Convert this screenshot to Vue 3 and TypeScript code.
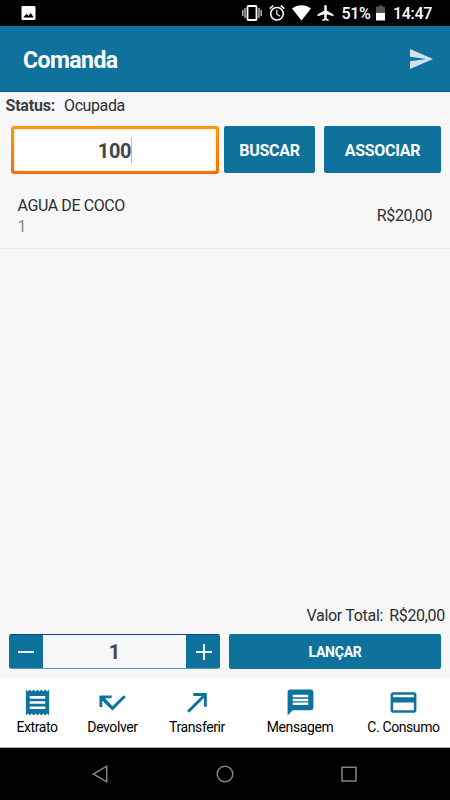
<script setup lang="ts">
import { ref } from 'vue'

interface Tab {
  label: string
  path: string
}

const code = ref('100')
const quantity = ref(1)

const items = [{ name: 'AGUA DE COCO', amount: 1, price: 'R$20,00' }]

const tabs: Tab[] = [
  { label: 'Extrato', path: 'M18 17H6v-2h12v2zm0-4H6v-2h12v2zm0-4H6V7h12v2zM3 22l1.5-1.5L6 22l1.5-1.5L9 22l1.5-1.5L12 22l1.5-1.5L15 22l1.5-1.5L18 22l1.5-1.5L21 22V2l-1.5 1.5L18 2l-1.5 1.5L15 2l-1.5 1.5L12 2l-1.5 1.5L9 2 7.5 3.5 6 2 4.5 3.5 3 2v20z' },
  { label: 'Devolver', path: 'M20.600 6.300L12 14.900 6.300 8.700H11.300V6.500H1.900v9h2.200v-4.900l7.900 7.500L22.200 7.900z' },
  { label: 'Transferir', path: 'M8.700 4.700v2.200h6.700L3.900 18.400 5.500 20 17 8.500v6.700h2.200V4.700z' },
  { label: 'Mensagem', path: 'M20 2H4c-1.100 0-1.990.9-1.990 2L2 22l4-4h14c1.100 0 2-.9 2-2V4c0-1.100-.9-2-2-2zm-2 12H6v-2h12v2zm0-3H6V9h12v2zm0-3H6V6h12v2z' },
  { label: 'C. Consumo', path: 'M20 4H4c-1.110 0-1.990.89-1.990 2L2 18c0 1.110.89 2 2 2h16c1.110 0 2-.89 2-2V6c0-1.110-.89-2-2-2zm0 14H4v-6h16v6zm0-10H4V6h16v2z' },
]
</script>

<template>
  <div class="screen">
    <div class="status">
      <svg class="photo" viewBox="0 0 16 16"><path fill="#fff" fill-rule="evenodd" d="M1.500 0h13Q16 0 16 1.500v13q0 1.500-1.500 1.500h-13Q0 16 0 14.500v-13Q0 0 1.500 0zM2 13h12L10.500 8 8 11.200 5.500 9.200z" /></svg>
      <svg class="vibrate" viewBox="0 0 20 16"><rect x="5.500" y="1" width="9" height="14" rx="1" fill="none" stroke="#fff" stroke-width="1.800" /><path d="M3 3v10M.8 5v6M17 3v10M19.200 5v6" stroke="#ccc" stroke-width="1.300" /></svg>
      <svg class="alarm" viewBox="1.800 1.800 20.400 20.400"><path fill="#fff" d="M22 5.720l-4.600-3.860-1.290 1.530 4.600 3.860L22 5.720zM7.880 3.390L6.600 1.860 2 5.710l1.290 1.530 4.590-3.850zM12.500 8H11v6l4.750 2.850.75-1.230-4-2.370V8zM12 4c-4.970 0-9 4.030-9 9s4.020 9 9 9a9 9 0 0 0 0-18zm0 16c-3.870 0-7-3.130-7-7s3.130-7 7-7 7 3.130 7 7-3.130 7-7 7z" /></svg>
      <svg class="wifi" viewBox="0 0 19 16"><path fill="#fff" d="M9.500 15.500L0 3.500C5.500-1 13.500-1 19 3.500z" /></svg>
      <svg class="plane" viewBox="2 2 20 20"><path fill="#fff" d="M22 16v-2l-8.500-5V3.500c0-.83-.67-1.500-1.500-1.500s-1.500.67-1.500 1.500V9L2 14v2l8.500-2.500V19L8 20.500V22l4-1 4 1v-1.500L13.500 19v-5.500L22 16z" /></svg>
      <span class="percent">51%</span>
      <svg class="battery" viewBox="0 0 10 16"><path fill="#555" d="M3 0h4v1.500h3V9H0V1.500h3z" /><path fill="#fff" d="M0 8h10v7q0 1-1 1H1q-1 0-1-1z" /></svg>
      <span class="clock">14:47</span>
    </div>

    <header class="appbar">
      <h1>Comanda</h1>
      <svg class="send" viewBox="2 3 21 18" preserveAspectRatio="none"><path d="M2.010 21L23 12 2.010 3 2 10l15 2-15 2z" /></svg>
    </header>

    <main>
      <div class="state"><b>Status:</b><span>Ocupada</span></div>
      <div class="search">
        <div class="field"><div class="field-inner"><span>{{ code }}</span><i class="caret"></i></div></div>
        <button class="btn find">BUSCAR</button>
        <button class="btn link">ASSOCIAR</button>
      </div>
      <div v-for="item in items" :key="item.name" class="item">
        <div>
          <div class="name">{{ item.name }}</div>
          <div class="amount">{{ item.amount }}</div>
        </div>
        <div class="price">{{ item.price }}</div>
      </div>
      <div class="total"><span>Valor Total:</span><span class="sum">R$20,00</span></div>
      <div class="actions">
        <div class="stepper">
          <button @click="quantity--"><svg viewBox="0 0 16 16"><path d="M0 8h16" /></svg></button>
          <span class="qty">{{ quantity }}</span>
          <button class="plus" @click="quantity++"><svg viewBox="0 0 16 16"><path d="M0 8h16M8 0v16" /></svg></button>
        </div>
        <button class="btn launch">LANÇAR</button>
      </div>
    </main>

    <nav class="tabs">
      <div v-for="tab in tabs" :key="tab.label" class="tab">
        <svg viewBox="0 0 24 24"><path :d="tab.path" /></svg>
        <span>{{ tab.label }}</span>
      </div>
    </nav>

    <div class="system">
      <svg viewBox="0 0 18 18"><path d="M14.700 1.200v15.600L1.300 9z" /></svg>
      <svg viewBox="0 0 18 18"><circle cx="9" cy="9" r="7.800" /></svg>
      <svg viewBox="0 0 18 18"><rect x="2" y="2.300" width="14" height="13.700" /></svg>
    </div>
  </div>
</template>

<style>
body { background: #000; }
</style>

<style scoped>
.screen {
  width: 450px;
  height: 800px;
  display: flex;
  flex-direction: column;
  overflow: hidden;
  background: #f7f7f7;
  color: #2b2e35;
  font-family: Roboto, "Liberation Sans", sans-serif;
}
svg { display: block; flex: none; }
.status {
  height: 26px;
  flex: none;
  display: flex;
  align-items: center;
  background: #000;
  color: #fff;
  font-size: 16px;
  line-height: 26px;
  font-weight: 500;
  letter-spacing: -.3px;
}
.photo { width: 15px; height: 14px; margin-left: 21px; }
.vibrate { width: 20px; height: 16px; margin-left: 206px; }
.alarm { width: 16px; height: 16px; margin-left: 6.500px; }
.wifi { width: 19px; height: 16px; margin-left: 7.500px; }
.plane { width: 17px; height: 16px; margin-left: 6px; }
.percent { width: 29px; margin-left: 7.500px; letter-spacing: -.4px; padding-top: 2px; }
.battery { width: 9.500px; height: 16px; margin-left: 5px; }
.clock { margin-left: 8px; padding-top: 2px; }
.appbar {
  height: 66px;
  flex: none;
  box-sizing: border-box;
  padding: 1px 17px 0 23px;
  display: flex;
  align-items: center;
  justify-content: space-between;
  background: #0e729d;
  border-bottom: 1px solid #075b8c;
}
h1 { margin: 0; color: #fff; font-size: 23px; line-height: 28px; font-weight: 700; letter-spacing: -.55px; padding-top: 3px; }
.send { width: 23px; height: 20px; fill: #cfe3ec; }
main { flex: 1; display: flex; flex-direction: column; min-height: 0; }
.state { height: 34px; flex: none; display: flex; gap: 9px; padding-left: 5.500px; font-size: 16px; letter-spacing: -.4px; line-height: 27px; box-sizing: border-box; }
.state b { color: #3b3f48; letter-spacing: -.2px; }
.search { display: flex; padding-left: 11px; height: 48px; flex: none; }
.field {
  width: 208px;
  height: 48px;
  box-sizing: border-box;
  padding: 3px;
  border-radius: 3px;
  background: linear-gradient(#fd9a0c, #f56f06);
}
.field-inner {
  height: 42px;
  box-sizing: border-box;
  padding-top: 2px;
  display: flex;
  align-items: center;
  justify-content: center;
  background: #fff;
  box-shadow: inset 0 0 3px #ffd1a3;
  color: #44464b;
  font-size: 20px;
  letter-spacing: -.3px;
  font-weight: 700;
}
.caret { width: 1px; height: 26px; background: #bbb; margin-top: -2px; }
.btn {
  border: 0;
  padding: 2px 0 0;
  border-radius: 2px;
  background: #0e729d;
  color: #fff;
  font: 700 16px Roboto, "Liberation Sans", sans-serif;
  letter-spacing: -.3px;
}
.find { width: 91px; height: 47px; margin-left: 5px; }
.link { width: 117px; height: 47px; margin-left: 9px; }
.item {
  height: 75px;
  flex: none;
  box-sizing: border-box;
  display: flex;
  justify-content: space-between;
  padding: 21px 18px 0 17.500px;
  border-bottom: 1px solid #e9e9e9;
  font-size: 16px;
  letter-spacing: -.4px;
  line-height: 22px;
}
.amount { color: #85878a; line-height: 20px; }
.price { padding-top: 10px; }
.total { display: flex; justify-content: flex-end; gap: 6px; margin-top: auto; padding-right: 5px; font-size: 16px; letter-spacing: -.3px; line-height: 19px; }
.actions { display: flex; padding: 9px 9px 9px; gap: 9px; height: 35px; flex: none; }
.stepper {
  width: 211px;
  height: 35px;
  box-sizing: border-box;
  display: flex;
  border-top: 1px solid #06468b;
  border-bottom: 1px solid #5798bd;
  border-radius: 2px;
  overflow: hidden;
}
.stepper button { width: 34px; padding: 0; border: 0; background: #0e729d; display: flex; align-items: center; justify-content: center; }
.stepper .plus { padding-left: 1px; }
.stepper svg { width: 16px; height: 16px; stroke: #e7f2f6; stroke-width: 2; }
.qty { flex: 1; text-align: center; color: #44464b; font-size: 20px; line-height: 34px; font-weight: 700; }
.launch { width: 212px; height: 35px; padding-top: 1px; font-size: 14px; letter-spacing: -.25px; }
.tabs {
  height: 70px;
  flex: none;
  box-sizing: border-box;
  display: grid;
  grid-template-columns: 74px 77px 92px 114px 93px;
  background: #fff;
  border-bottom: 1px solid #aaa;
  color: #000;
}
.tab { display: flex; flex-direction: column; align-items: center; padding-top: 9px; font-size: 14px; letter-spacing: -.4px; line-height: 17px; white-space: nowrap; }
.tab svg { width: 31px; height: 31px; margin-bottom: 1px; fill: #0e729d; }
.system {
  height: 52px;
  flex: none;
  display: flex;
  justify-content: center;
  align-items: center;
  gap: 106px;
  background: #000;
}
.system svg { width: 18px; height: 18px; fill: none; stroke: #858585; stroke-width: 1.500; }
</style>
